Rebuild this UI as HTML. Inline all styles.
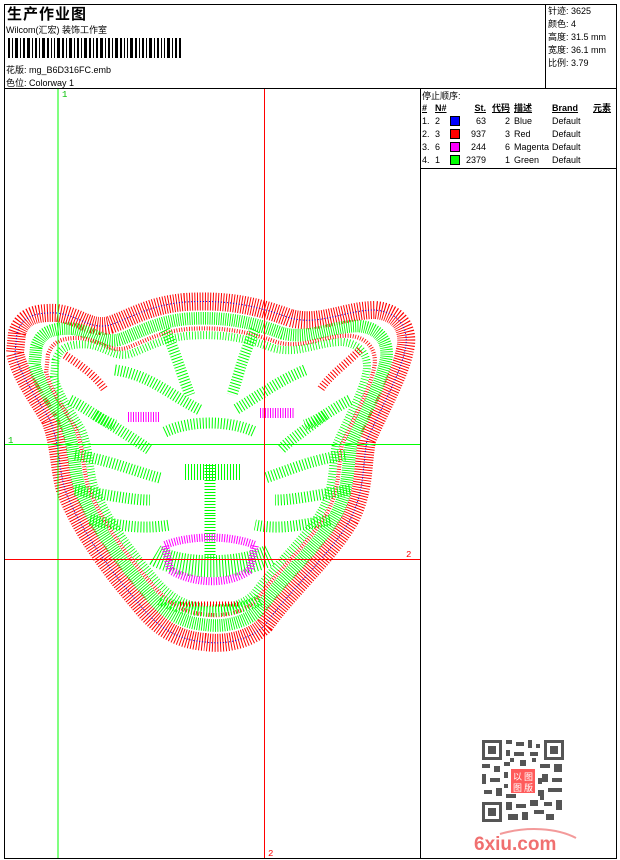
<!DOCTYPE html>
<html><head><meta charset="utf-8"><style>
*{margin:0;padding:0;box-sizing:border-box}
body{width:620px;height:860px;background:#fff;position:relative;overflow:hidden;font-family:"Liberation Sans","WenQuanYi Zen Hei","Noto Sans CJK SC",sans-serif;font-size:9px;color:#000}
.a{position:absolute;white-space:nowrap}
.l{position:absolute;background:#000}
td{padding:0;height:13px;font-size:9px;white-space:nowrap}
</style></head><body>
<div class="l" style="left:4px;top:4px;width:613px;height:1px"></div>
<div class="l" style="left:4px;top:858px;width:613px;height:1px"></div>
<div class="l" style="left:4px;top:4px;width:1px;height:855px"></div>
<div class="l" style="left:616px;top:4px;width:1px;height:855px"></div>
<div class="l" style="left:4px;top:88px;width:613px;height:1px"></div>
<div class="l" style="left:545px;top:4px;width:1px;height:85px"></div>
<div class="l" style="left:420px;top:88px;width:1px;height:771px"></div>
<div class="l" style="left:420px;top:168px;width:197px;height:1px"></div>

<div class="a" style="left:7px;top:3px;font-size:15px;font-weight:bold;letter-spacing:1px">生产作业图</div>
<div class="a" style="left:6px;top:23px">Wilcom(汇宏) 装饰工作室</div>
<svg class="a" style="left:8px;top:38px" width="175" height="20">
<g fill="#000">
<rect x="0" y="0" width="2" height="20"/><rect x="4" y="0" width="1" height="20"/><rect x="7" y="0" width="3" height="20"/><rect x="12" y="0" width="1" height="20"/><rect x="15" y="0" width="2" height="20"/><rect x="19" y="0" width="3" height="20"/><rect x="24" y="0" width="1" height="20"/><rect x="27" y="0" width="2" height="20"/><rect x="31" y="0" width="1" height="20"/><rect x="34" y="0" width="3" height="20"/><rect x="39" y="0" width="2" height="20"/><rect x="43" y="0" width="1" height="20"/><rect x="46" y="0" width="1" height="20"/><rect x="49" y="0" width="3" height="20"/><rect x="54" y="0" width="2" height="20"/><rect x="58" y="0" width="1" height="20"/><rect x="61" y="0" width="3" height="20"/><rect x="66" y="0" width="1" height="20"/><rect x="69" y="0" width="2" height="20"/><rect x="73" y="0" width="1" height="20"/><rect x="76" y="0" width="3" height="20"/><rect x="81" y="0" width="2" height="20"/><rect x="85" y="0" width="1" height="20"/><rect x="88" y="0" width="2" height="20"/><rect x="92" y="0" width="3" height="20"/><rect x="97" y="0" width="1" height="20"/><rect x="100" y="0" width="2" height="20"/><rect x="104" y="0" width="1" height="20"/><rect x="107" y="0" width="3" height="20"/><rect x="112" y="0" width="2" height="20"/><rect x="116" y="0" width="1" height="20"/><rect x="119" y="0" width="1" height="20"/><rect x="122" y="0" width="3" height="20"/><rect x="127" y="0" width="2" height="20"/><rect x="131" y="0" width="1" height="20"/><rect x="134" y="0" width="2" height="20"/><rect x="138" y="0" width="1" height="20"/><rect x="141" y="0" width="3" height="20"/><rect x="146" y="0" width="1" height="20"/><rect x="149" y="0" width="2" height="20"/><rect x="153" y="0" width="1" height="20"/><rect x="156" y="0" width="1" height="20"/><rect x="159" y="0" width="3" height="20"/><rect x="164" y="0" width="1" height="20"/><rect x="167" y="0" width="2" height="20"/><rect x="171" y="0" width="2" height="20"/>
</g></svg>
<div class="a" style="left:6px;top:63px">花版: mg_B6D316FC.emb</div>
<div class="a" style="left:6px;top:76px">色位: Colorway 1</div>

<div class="a" style="left:548px;top:5px;line-height:13px">针迹: 3625<br>颜色: 4<br>高度: 31.5 mm<br>宽度: 36.1 mm<br>比例: 3.79</div>

<div class="a" style="left:422px;top:89px">停止顺序:</div>
<table class="a" style="left:422px;top:101px;border-collapse:collapse">
<tr style="font-weight:bold;text-decoration:underline"><td style="width:13px">#</td><td style="width:15px">N#</td><td style="width:14px"></td><td style="width:22px;text-align:right">St.</td><td style="width:24px;text-align:right">代码</td><td style="width:42px;padding-left:4px">描述</td><td style="width:36px">Brand</td><td style="padding-left:5px">元素</td></tr>
<tr><td>1.</td><td>2</td><td><div style="width:10px;height:10px;background:#0000ff;border:1px solid #000"></div></td><td style="text-align:right">63</td><td style="text-align:right">2</td><td style="padding-left:4px">Blue</td><td>Default</td><td></td></tr>
<tr><td>2.</td><td>3</td><td><div style="width:10px;height:10px;background:#ff0000;border:1px solid #000"></div></td><td style="text-align:right">937</td><td style="text-align:right">3</td><td style="padding-left:4px">Red</td><td>Default</td><td></td></tr>
<tr><td>3.</td><td>6</td><td><div style="width:10px;height:10px;background:#ff00ff;border:1px solid #000"></div></td><td style="text-align:right">244</td><td style="text-align:right">6</td><td style="padding-left:4px">Magenta</td><td>Default</td><td></td></tr>
<tr><td>4.</td><td>1</td><td><div style="width:10px;height:10px;background:#00ff00;border:1px solid #000"></div></td><td style="text-align:right">2379</td><td style="text-align:right">1</td><td style="padding-left:4px">Green</td><td>Default</td><td></td></tr>
</table>

<svg class="a" style="left:0;top:0" width="420" height="860">
<defs>
<path id="o" d="M17,333 C22,318 32,312 57,313 C80,316 90,330 110,325 C130,318 150,305 185,302 C220,300 250,303 290,318 C320,326 345,310 375,310 C400,312 410,330 405,350 C400,375 380,410 367,440 C362,470 365,490 350,520 C330,555 290,590 265,625 C250,640 225,645 205,642 C180,640 160,630 140,605 C110,570 80,530 65,490 C58,465 60,445 50,420 C35,395 20,375 15,353 Z"/>
</defs>
<use href="#o" fill="none" stroke="#ff0000" stroke-width="18" stroke-dasharray="1 1.6"/>
<use href="#o" fill="none" stroke="#0000ff" stroke-width="1" stroke-dasharray="1 2"/>
<g transform="translate(210,470) scale(0.9) translate(-210,-470)">
<use href="#o" fill="none" stroke="#00ff00" stroke-width="14" stroke-dasharray="1 1.5"/>
</g>
<g transform="translate(210,470) scale(0.84) translate(-210,-470)">
<use href="#o" fill="none" stroke="#ff0000" stroke-width="5" stroke-dasharray="1 2"/>
</g>
<g transform="translate(210,470) scale(0.8) translate(-210,-470)">
<use href="#o" fill="none" stroke="#00ff00" stroke-width="10" stroke-dasharray="1 2.5"/>
</g>
<g fill="none" stroke="#00ff00" stroke-width="11" stroke-dasharray="1 2">
<path d="M165,330 C175,350 180,370 190,395"/>
<path d="M255,330 C245,350 240,370 232,395"/>
<path d="M115,370 C150,375 170,395 200,410"/>
<path d="M305,370 C280,380 260,395 235,410"/>
<path d="M165,432 C190,420 230,420 255,432"/>
<path d="M95,415 C120,430 135,440 150,450"/>
<path d="M325,415 C305,430 290,440 280,450"/>
<path d="M75,455 C110,460 130,470 160,478"/>
<path d="M345,455 C310,460 290,470 265,478"/>
<path d="M75,490 C110,495 130,500 150,500"/>
<path d="M350,490 C315,495 295,500 275,500"/>
<path d="M90,520 C120,525 140,530 170,525"/>
<path d="M330,520 C300,525 280,530 255,525"/>
<path d="M185,472 L240,472" stroke-width="16"/>
<path d="M210,465 L210,515"/>
<path d="M155,555 C180,570 240,570 270,555" stroke-width="22"/>
<path d="M160,600 C190,615 230,615 260,600"/>
<path d="M210,515 L210,560"/>
<path d="M70,400 C90,410 100,420 115,425"/>
<path d="M350,400 C330,410 320,420 305,425"/>
</g>
<g fill="none" stroke="#ff0000" stroke-width="8" stroke-dasharray="1 2">
<path d="M65,355 C80,365 95,375 105,390"/>
<path d="M360,350 C345,365 330,375 320,390"/>
<path d="M180,604 L240,604" stroke-width="5"/>
</g>
<g fill="none" stroke="#ff00ff" stroke-dasharray="1 1.5">
<path d="M128,417 L160,417" stroke-width="10"/>
<path d="M260,413 L295,413" stroke-width="10"/>
<path d="M165,545 C190,535 230,535 255,545 L250,570 C230,585 195,585 170,570 Z" stroke-width="8"/>
</g>
<line x1="58" y1="89" x2="58" y2="858" stroke="#00ff00"/>
<line x1="5" y1="444.5" x2="420" y2="444.5" stroke="#00ff00"/>
<line x1="264.5" y1="89" x2="264.5" y2="858" stroke="#ff0000"/>
<line x1="5" y1="559.5" x2="420" y2="559.5" stroke="#ff0000"/>
<text x="62" y="97" fill="#00c000" font-size="9" font-family="Liberation Mono">1</text>
<text x="8" y="443" fill="#00c000" font-size="9" font-family="Liberation Mono">1</text>
<text x="406" y="557" fill="#ff0000" font-size="9" font-family="Liberation Mono">2</text>
<text x="268" y="856" fill="#ff0000" font-size="9" font-family="Liberation Mono">2</text>
</svg>

<svg class="a" style="left:480px;top:738px" width="86" height="86">
<rect width="86" height="86" fill="#fff"/>
<g fill="#555">
<rect x="2" y="2" width="20" height="20"/><rect x="64" y="2" width="20" height="20"/><rect x="2" y="64" width="20" height="20"/>
</g>
<g fill="#fff"><rect x="5" y="5" width="14" height="14"/><rect x="67" y="5" width="14" height="14"/><rect x="5" y="67" width="14" height="14"/></g>
<g fill="#555"><rect x="8" y="8" width="8" height="8"/><rect x="70" y="8" width="8" height="8"/><rect x="8" y="70" width="8" height="8"/>
<path d="M26 2h6v4h-6zM36 4h8v4h-8zM48 2h4v8h-4zM56 6h4v4h-4zM26 12h4v6h-4zM34 14h10v4h-10zM50 14h8v4h-8zM2 26h8v4h-8zM14 28h6v6h-6zM24 24h6v4h-6zM60 26h10v4h-10zM74 26h8v8h-8zM2 36h4v10h-4zM10 40h10v4h-10zM62 36h6v8h-6zM72 40h10v4h-10zM4 52h8v4h-8zM16 50h6v8h-6zM26 56h10v4h-10zM58 52h6v6h-6zM68 50h14v4h-14zM26 64h6v8h-6zM36 66h10v4h-10zM50 62h8v6h-8zM64 64h8v4h-8zM76 62h6v10h-6zM28 76h10v6h-10zM42 74h6v8h-6zM54 72h10v4h-10zM66 76h8v6h-8zM30 20h4v4h-4zM40 22h6v6h-6zM52 20h4v4h-4zM24 34h4v6h-4zM58 40h4v6h-4zM24 46h4v4h-4zM60 58h4v4h-4z"/></g>
<rect x="31" y="31" width="24" height="24" fill="#ff5a5a"/>
<text x="33" y="42" font-size="9" fill="#fff">以</text><text x="44" y="42" font-size="9" fill="#fff">图</text>
<text x="33" y="53" font-size="9" fill="#fff">图</text><text x="44" y="53" font-size="9" fill="#fff">版</text>
</svg>
<svg class="a" style="left:472px;top:826px" width="110" height="28">
<path d="M28 8 C55 0 85 2 104 12" fill="none" stroke="#f39a9a" stroke-width="2"/>
<text x="2" y="24" font-size="19" font-weight="bold" fill="#f07070" font-family="Liberation Sans">6xiu.com</text>
</svg>
</body></html>
